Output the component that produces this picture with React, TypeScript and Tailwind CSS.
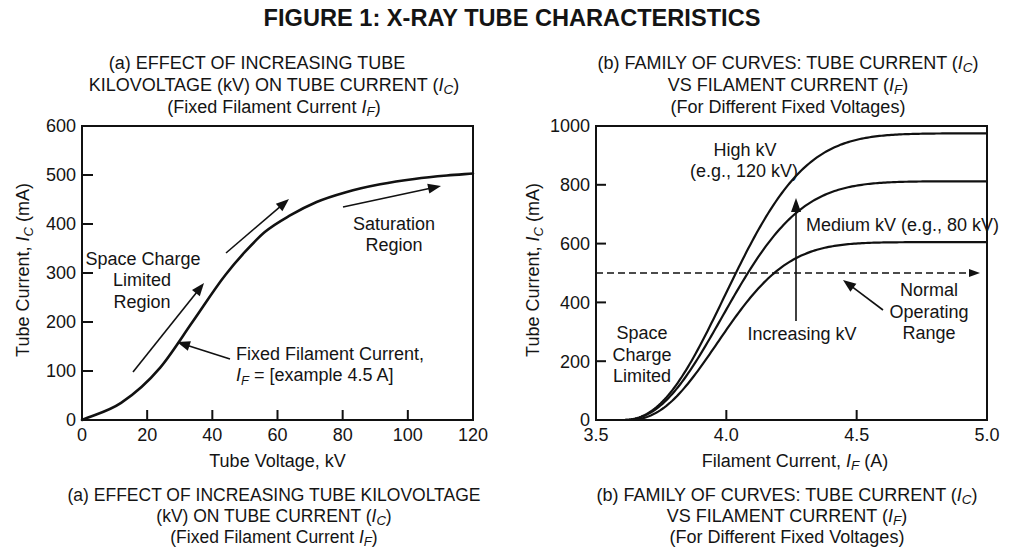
type Pt = [number, number];

// smooth cubic through points (weighted central-difference tangents)
function smoothPath(pts: Pt[]) {
  const n = pts.length;
  const h: number[] = [];
  const m: number[] = [];
  for (let i = 0; i < n - 1; i++) {
    h.push(pts[i + 1][0] - pts[i][0]);
    m.push((pts[i + 1][1] - pts[i][1]) / h[i]);
  }
  const t: number[] = new Array(n).fill(0);
  t[0] = m[0];
  t[n - 1] = m[n - 2];
  for (let i = 1; i < n - 1; i++) {
    t[i] = (m[i - 1] * h[i] + m[i] * h[i - 1]) / (h[i - 1] + h[i]);
  }
  let d = `M${pts[0][0].toFixed(2)},${pts[0][1].toFixed(2)}`;
  for (let i = 0; i < n - 1; i++) {
    const [x0, y0] = pts[i];
    const [x1, y1] = pts[i + 1];
    const k = h[i] / 3;
    d += ` C${(x0 + k).toFixed(2)},${(y0 + t[i] * k).toFixed(2)} ${(x1 - k).toFixed(2)},${(y1 - t[i + 1] * k).toFixed(2)} ${x1.toFixed(2)},${y1.toFixed(2)}`;
  }
  return d;
}

function Arrow({
  x1,
  y1,
  x2,
  y2,
  head = 13,
  hw = 5,
  sw = 1.6,
  dash,
}: {
  x1: number;
  y1: number;
  x2: number;
  y2: number;
  head?: number;
  hw?: number;
  sw?: number;
  dash?: string;
}) {
  const len = Math.hypot(x2 - x1, y2 - y1);
  const ux = (x2 - x1) / len;
  const uy = (y2 - y1) / len;
  const bx = x2 - ux * head;
  const by = y2 - uy * head;
  const px = -uy * hw;
  const py = ux * hw;
  return (
    <g>
      <line x1={x1} y1={y1} x2={bx + ux} y2={by + uy} stroke="#111" strokeWidth={sw} strokeDasharray={dash} />
      <polygon points={`${x2},${y2} ${bx + px},${by + py} ${bx - px},${by - py}`} fill="#111" />
    </g>
  );
}

function Sub({ children }: { children: string }) {
  return (
    <>
      <span className="italic">I</span>
      <sub className="italic">{children}</sub>
    </>
  );
}

// ---------- chart (a) ----------
const A = { x0: 82, x1: 473, y0: 8, y1: 302 };
const ax = (kv: number) => A.x0 + (kv / 120) * (A.x1 - A.x0);
const ay = (ma: number) => A.y1 - (ma / 600) * (A.y1 - A.y0);

// read off the reference plot
const tubeCurve: Pt[] = [
  [0, 0],
  [12, 35],
  [24, 107],
  [34, 201],
  [44, 296],
  [50, 343],
  [56, 383],
  [64, 418],
  [72, 445],
  [81, 465],
  [91.5, 481],
  [102, 492],
  [112, 499],
  [120, 503],
];

function ChartA() {
  return (
    <svg width={512} height={332} className="block overflow-visible">
      {/* ticks */}
      {[100, 200, 300, 400, 500].map((v) => (
        <line key={v} x1={A.x0} x2={A.x0 + 11} y1={ay(v)} y2={ay(v)} stroke="#111" strokeWidth={2} />
      ))}
      {[20, 40, 60, 80, 100].map((v) => (
        <line key={v} x1={ax(v)} x2={ax(v)} y1={A.y1} y2={A.y1 - 10} stroke="#111" strokeWidth={2} />
      ))}
      <rect x={A.x0} y={A.y0} width={A.x1 - A.x0} height={A.y1 - A.y0} fill="none" stroke="#111" strokeWidth={2} />

      <g fontSize={18} fill="#141414">
        {[0, 100, 200, 300, 400, 500, 600].map((v) => (
          <text key={v} x={A.x0 - 6} y={ay(v) + 6.4} textAnchor="end">
            {v}
          </text>
        ))}
        {[0, 20, 40, 60, 80, 100, 120].map((v) => (
          <text key={v} x={ax(v)} y={323} textAnchor="middle">
            {v}
          </text>
        ))}
        <text transform="rotate(-90)" x={-152} y={29.4} textAnchor="middle">
          Tube Current,{" "}
          <tspan fontStyle="italic">I</tspan>
          <tspan fontStyle="italic" fontSize={13} dy={4}>
            C
          </tspan>
          <tspan dy={-4}> (mA)</tspan>
        </text>

        <text x={143} y={146.6} textAnchor="middle">Space Charge</text>
        <text x={142} y={168} textAnchor="middle">Limited</text>
        <text x={142} y={190} textAnchor="middle">Region</text>

        <text x={394} y={111.6} textAnchor="middle">Saturation</text>
        <text x={394} y={133} textAnchor="middle">Region</text>

        <text x={236} y={241.6}>Fixed Filament Current,</text>
        <text x={236} y={263}>
          <tspan fontStyle="italic">I</tspan>
          <tspan fontStyle="italic" fontSize={13} dy={4}>
            F
          </tspan>
          <tspan dy={-4}> = [example 4.5 A]</tspan>
        </text>
      </g>

      <path
        d={smoothPath(tubeCurve.map(([x, y]) => [ax(x), ay(y)] as Pt))}
        fill="none"
        stroke="#111"
        strokeWidth={2.6}
        strokeLinecap="round"
      />

      <Arrow x1={133} y1={254} x2={204} y2={165} />
      <Arrow x1={226} y1={135} x2={289} y2={81} />
      <Arrow x1={343} y1={89} x2={441} y2={68} />
      <Arrow x1={230} y1={241} x2={177} y2={224} />
    </svg>
  );
}

// ---------- chart (b) ----------
const B = { x0: 84, x1: 475, y0: 8, y1: 302 };
const bx = (a: number) => B.x0 + ((a - 3.5) / 1.5) * (B.x1 - B.x0);
const by = (ma: number) => B.y1 - (ma / 1000) * (B.y1 - B.y0);

function family(amp: number, w: number, start: number) {
  const pts: string[] = [];
  for (let i = 0; i <= 200; i++) {
    const a = 3.5 + (1.5 * i) / 200;
    const v = amp * (1 - Math.exp(-Math.pow(Math.max(0, a - start) / w, 2.3)));
    pts.push(`${bx(a).toFixed(2)},${by(v).toFixed(2)}`);
  }
  return "M" + pts.join(" L");
}

const curvesB = [
  { amp: 975, w: 0.504, start: 3.6 },
  { amp: 812, w: 0.492, start: 3.6 },
  { amp: 605, w: 0.442, start: 3.62 },
];

function ChartB() {
  return (
    <svg width={512} height={332} className="block overflow-visible">
      {[200, 400, 600, 800].map((v) => (
        <line key={v} x1={B.x0} x2={B.x0 + 10} y1={by(v)} y2={by(v)} stroke="#111" strokeWidth={2} />
      ))}
      {[4.0, 4.5].map((v) => (
        <line key={v} x1={bx(v)} x2={bx(v)} y1={B.y1} y2={B.y1 - 10} stroke="#111" strokeWidth={2} />
      ))}
      <rect x={B.x0} y={B.y0} width={B.x1 - B.x0} height={B.y1 - B.y0} fill="none" stroke="#111" strokeWidth={2} />

      {curvesB.map((c) => (
        <path key={c.amp} d={family(c.amp, c.w, c.start)} fill="none" stroke="#111" strokeWidth={2.2} />
      ))}

      <Arrow x1={84} y1={155} x2={468} y2={155} dash="7 4" head={11} hw={4} sw={1.5} />
      <Arrow x1={284} y1={203} x2={284} y2={80} head={14} hw={5} />
      <Arrow x1={371} y1={192} x2={331} y2={162} />

      <g fontSize={18} fill="#141414">
        {[0, 200, 400, 600, 800, 1000].map((v) => (
          <text key={v} x={B.x0 - 6} y={by(v) + 6.4} textAnchor="end">
            {v}
          </text>
        ))}
        {["3.5", "4.0", "4.5", "5.0"].map((v) => (
          <text key={v} x={bx(parseFloat(v))} y={323} textAnchor="middle">
            {v}
          </text>
        ))}
        <text transform="rotate(-90)" x={-152} y={27.4} textAnchor="middle">
          Tube Current,{" "}
          <tspan fontStyle="italic">I</tspan>
          <tspan fontStyle="italic" fontSize={13} dy={4}>
            C
          </tspan>
          <tspan dy={-4}> (mA)</tspan>
        </text>

        <text x={233} y={37.6} textAnchor="middle">High kV</text>
        <text x={232} y={59} textAnchor="middle">(e.g., 120 kV)</text>

        <text x={294} y={113}>Medium kV (e.g., 80 kV)</text>

        <text x={290} y={221.6} textAnchor="middle">Increasing kV</text>

        <text x={417} y={178} textAnchor="middle">Normal</text>
        <text x={417} y={200} textAnchor="middle">Operating</text>
        <text x={417} y={221} textAnchor="middle">Range</text>

        <text x={130} y={221} textAnchor="middle">Space</text>
        <text x={130} y={242.6} textAnchor="middle">Charge</text>
        <text x={130} y={264} textAnchor="middle">Limited</text>
      </g>
    </svg>
  );
}

export default function App() {
  return (
    <div className="h-[558px] w-[1024px] overflow-hidden bg-white font-['Liberation_Sans',Arial,sans-serif] text-[#141414]">
      <h1 className="pt-[4px] text-center text-[23.6px] font-bold leading-[28px]">
        FIGURE 1: X-RAY TUBE CHARACTERISTICS
      </h1>

      <div className="grid grid-cols-2">
        {/* (a) */}
        <section className="flex flex-col">
          <div className="mt-[20px] pl-[36px] text-center text-[18px] leading-[22px]">
            <div className="pr-[34px]">(a) EFFECT OF INCREASING TUBE</div>
            <div>
              KILOVOLTAGE (kV) ON TUBE CURRENT (<Sub>C</Sub>)
            </div>
            <div>
              (Fixed Filament Current <Sub>F</Sub>)
            </div>
          </div>
          <ChartA />
          <div className="pl-[43px] text-center text-[18px] leading-[22px]">Tube Voltage, kV</div>
          <div className="mt-[13px] pl-[36px] text-center text-[17.5px] leading-[21px]">
            <div>(a) EFFECT OF INCREASING TUBE KILOVOLTAGE</div>
            <div>
              (kV) ON TUBE CURRENT (<Sub>C</Sub>)
            </div>
            <div>
              (Fixed Filament Current <Sub>F</Sub>)
            </div>
          </div>
        </section>

        {/* (b) */}
        <section className="flex flex-col">
          <div className="mt-[20px] pl-[40px] text-center text-[18px] leading-[22px]">
            <div>
              (b) FAMILY OF CURVES: TUBE CURRENT (<Sub>C</Sub>)
            </div>
            <div>
              VS FILAMENT CURRENT (<Sub>F</Sub>)
            </div>
            <div>(For Different Fixed Voltages)</div>
          </div>
          <ChartB />
          <div className="pl-[54px] text-center text-[18px] leading-[22px]">
            Filament Current, <Sub>F</Sub> (A)
          </div>
          <div className="mt-[13px] pl-[38px] text-center text-[18px] leading-[21px]">
            <div>
              (b) FAMILY OF CURVES: TUBE CURRENT (<Sub>C</Sub>)
            </div>
            <div>
              VS FILAMENT CURRENT (<Sub>F</Sub>)
            </div>
            <div>(For Different Fixed Voltages)</div>
          </div>
        </section>
      </div>
    </div>
  );
}
